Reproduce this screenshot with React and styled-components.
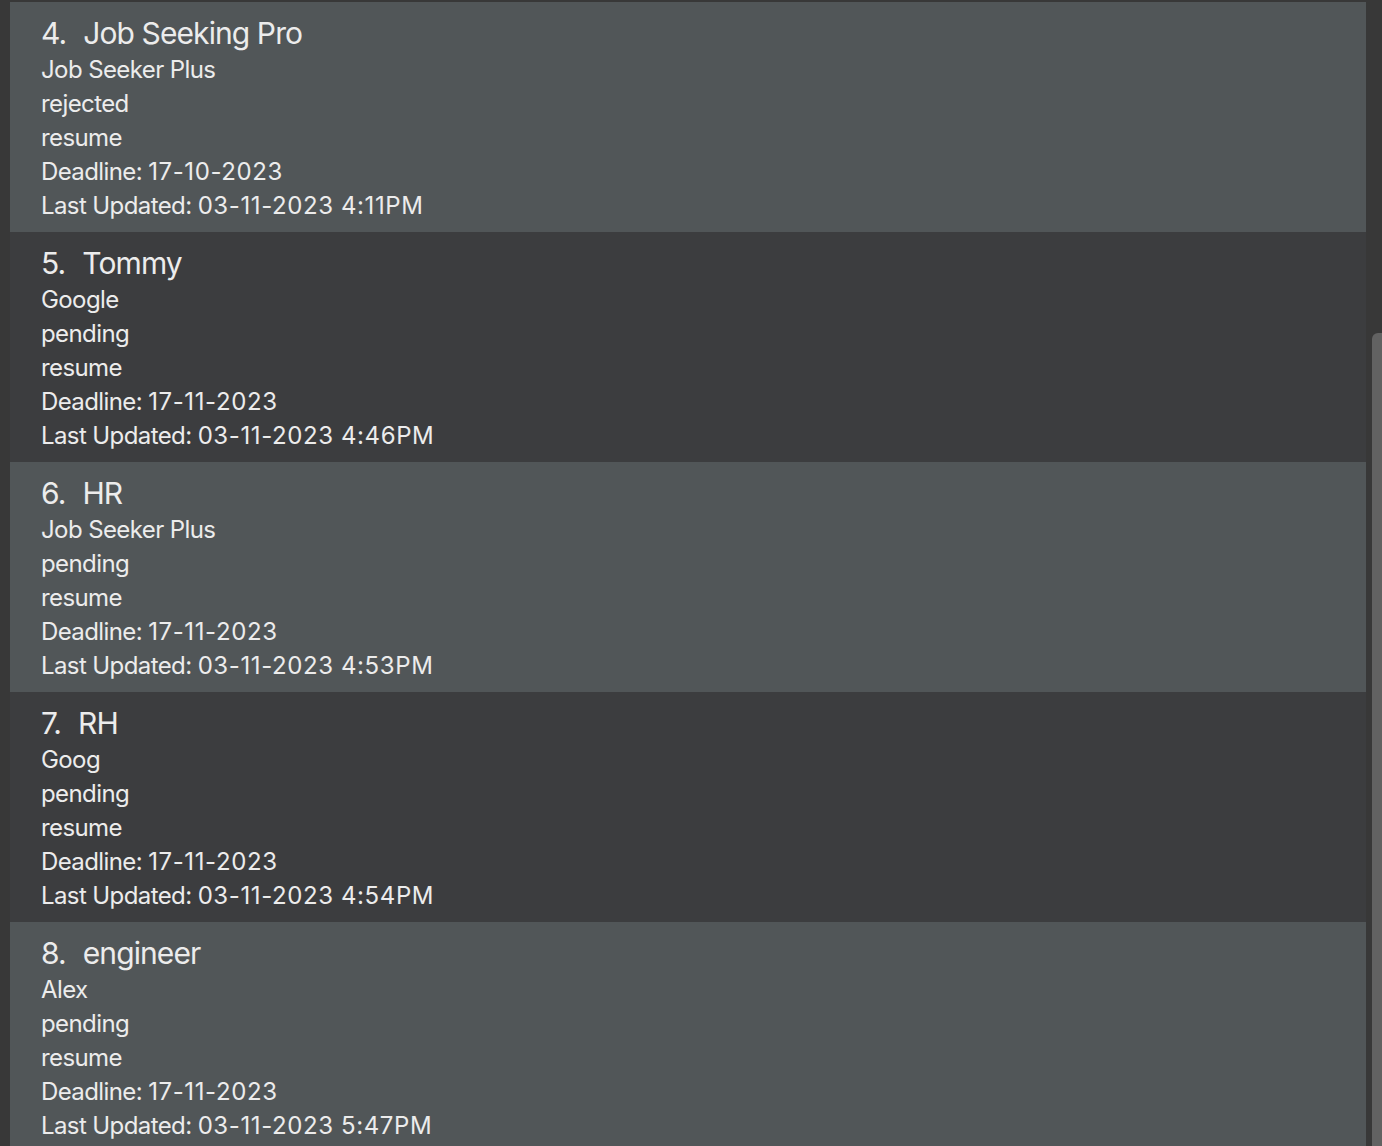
import styled, { createGlobalStyle } from 'styled-components'

const GlobalStyle = createGlobalStyle`
  html, body {
    margin: 0;
    padding: 0;
    background: #383838;
    overflow: hidden;
  }
  body {
    font-family: Inter, "Noto Sans", sans-serif;
  }
`

const Screen = styled.div`
  display: flex;
  width: 1382px;
  height: 1146px;
  overflow: hidden;
  background: #383838;
`

const List = styled.div`
  display: flex;
  flex-direction: column;
  width: 1356px;
  padding: 2px 0 0 10px;
`

const Card = styled.div`
  display: flex;
  flex-direction: column;
  flex-shrink: 0;
  height: 230px;
  box-sizing: border-box;
  padding: 13px 0 10px 31px;
  background: ${props => (props.odd ? '#3c3d3f' : '#515658')};
  color: #ececec;
`

const Title = styled.div`
  display: flex;
  gap: 17px;
  font-size: 30px;
  line-height: 36px;
  margin-bottom: 2px;
  letter-spacing: -0.9px;
`

const Line = styled.div`
  font-size: 24px;
  line-height: 34px;
  letter-spacing: -0.6px;
`

// dates and times are set wider than the words around them
const Stamp = styled.span`
  letter-spacing: 0.6px;
`

const Track = styled.div`
  display: flex;
  flex-direction: column;
  width: 16px;
  padding-left: 6px;
  box-sizing: border-box;
`

const Thumb = styled.div`
  margin-top: 333px;
  flex: 1;
  background: #626262;
  border-radius: 6px 0 0 0;
`

const jobs = [
  { n: 4, title: 'Job Seeking Pro', company: 'Job Seeker Plus', status: 'rejected', deadline: '17-10-2023', updated: '03-11-2023 4:11PM' },
  { n: 5, title: 'Tommy', company: 'Google', status: 'pending', deadline: '17-11-2023', updated: '03-11-2023 4:46PM' },
  { n: 6, title: 'HR', company: 'Job Seeker Plus', status: 'pending', deadline: '17-11-2023', updated: '03-11-2023 4:53PM' },
  { n: 7, title: 'RH', company: 'Goog', status: 'pending', deadline: '17-11-2023', updated: '03-11-2023 4:54PM' },
  { n: 8, title: 'engineer', company: 'Alex', status: 'pending', deadline: '17-11-2023', updated: '03-11-2023 5:47PM' },
]

export default function App() {
  return (
    <>
      <GlobalStyle />
      <Screen>
        <List>
          {jobs.map((job, i) => (
            <Card key={job.n} odd={i % 2 === 1}>
              <Title>
                <span>{job.n}.</span>
                <span>{job.title}</span>
              </Title>
              <Line>{job.company}</Line>
              <Line>{job.status}</Line>
              <Line>resume</Line>
              <Line>Deadline: <Stamp>{job.deadline}</Stamp></Line>
              <Line>Last Updated: <Stamp>{job.updated}</Stamp></Line>
            </Card>
          ))}
        </List>
        <Track>
          <Thumb />
        </Track>
      </Screen>
    </>
  )
}
